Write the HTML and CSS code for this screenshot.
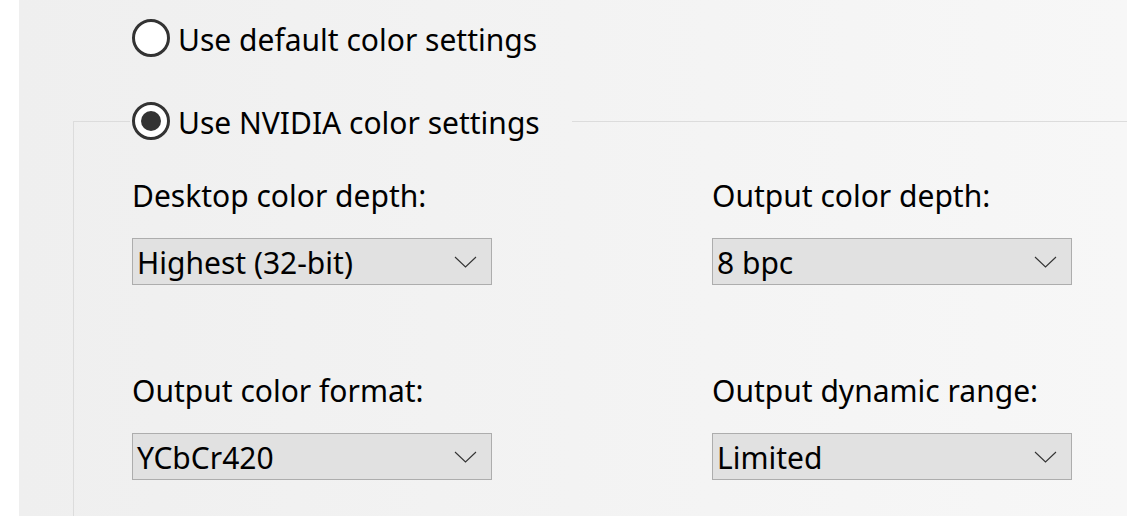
FILE: index.html
```html
<!DOCTYPE html>
<html>
<head>
<meta charset="utf-8">
<link rel="stylesheet" href="styles.css">
</head>
<body>
<div class="panel">
  <div class="radio">
    <span class="circle"></span>
    <span class="radio-label">Use default color settings</span>
  </div>
  <fieldset class="group">
    <legend class="radio legend">
      <span class="circle checked"></span>
      <span class="radio-label">Use NVIDIA color settings</span>
    </legend>
    <div class="grid">
      <div class="field">
        <div class="label">Desktop color depth:</div>
        <div class="select"><span class="value">Highest (32-bit)</span><svg class="chev" width="23" height="12" viewBox="0 0 23 12"><path d="M1 1 L11.5 11 L22 1" fill="none" stroke="#333" stroke-width="1.1"/></svg></div>
      </div>
      <div class="field">
        <div class="label">Output color depth:</div>
        <div class="select"><span class="value">8 bpc</span><svg class="chev" width="23" height="12" viewBox="0 0 23 12"><path d="M1 1 L11.5 11 L22 1" fill="none" stroke="#333" stroke-width="1.1"/></svg></div>
      </div>
      <div class="field">
        <div class="label">Output color format:</div>
        <div class="select"><span class="value">YCbCr420</span><svg class="chev" width="23" height="12" viewBox="0 0 23 12"><path d="M1 1 L11.5 11 L22 1" fill="none" stroke="#333" stroke-width="1.1"/></svg></div>
      </div>
      <div class="field">
        <div class="label">Output dynamic range:</div>
        <div class="select"><span class="value">Limited</span><svg class="chev" width="23" height="12" viewBox="0 0 23 12"><path d="M1 1 L11.5 11 L22 1" fill="none" stroke="#333" stroke-width="1.1"/></svg></div>
      </div>
    </div>
  </fieldset>
</div>
</body>
</html>
```

FILE: styles.css
```css
html, body {
  margin: 0;
  padding: 0;
  background: #ffffff;
  overflow: hidden;
}
body {
  width: 1127px;
  height: 516px;
  font-family: "Noto Sans", "Open Sans", sans-serif;
  font-size: 30px;
  color: #000;
}
.panel {
  margin-left: 19px;
  height: 516px;
  overflow: hidden;
  background: linear-gradient(to right, #efefef, #f7f7f7);
  padding: 19px 0 0 113px;
  box-sizing: border-box;
  position: relative;
}
.radio {
  display: flex;
  align-items: center;
  height: 38px;
}
.circle {
  width: 38px;
  height: 38px;
  box-sizing: border-box;
  border: 3px solid #333;
  border-radius: 50%;
  background: #fff;
  position: relative;
  flex: none;
}
.circle.checked::after {
  content: "";
  position: absolute;
  left: 6px;
  top: 6px;
  width: 20px;
  height: 20px;
  border-radius: 50%;
  background: #333;
}
.radio-label {
  margin-left: 8px;
  line-height: 38px;
  padding-top: 3px;
}
.group {
  margin: 45px 0 0 -59px;
  padding: 0 0 0 56px;
  border: 1px solid #dcdcdc;
  border-right: none;
  border-bottom: none;
  width: 1200px;
  min-height: 500px;
}
.legend {
  padding: 0 32px 0 2px;
}
.grid {
  display: grid;
  grid-template-columns: 580px 360px;
  row-gap: 86px;
  padding-top: 36px;
  margin-left: 2px;
}
.label {
  height: 40px;
  line-height: 40px;
  margin-bottom: 22px;
}
.select {
  width: 360px;
  height: 47px;
  box-sizing: border-box;
  border: 1px solid #adadad;
  background: #e1e1e1;
  display: flex;
  align-items: center;
  justify-content: space-between;
  padding: 2px 14px 0 4px;
}
.chev {
  display: block;
  margin-top: -2px;
}
```
